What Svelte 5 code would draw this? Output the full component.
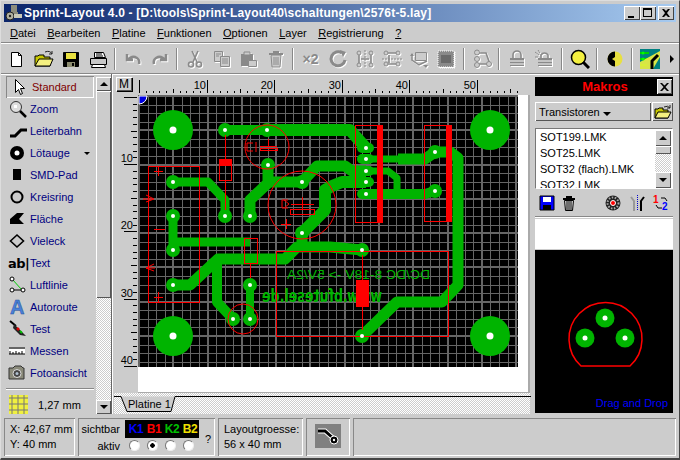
<script lang="ts">
  const menus = ['Datei', 'Bearbeiten', 'Platine', 'Funktionen', 'Optionen', 'Layer', 'Registrierung', '?'];
  const macros = ['SOT199.LMK', 'SOT25.LMK', 'SOT32 (flach).LMK', 'SOT32.LMK'];

  const range = (n: number) => Array.from({ length: n }, (_, i) => i);
  const gridX = range(45).map((k) => ({ p: 139 + Math.round(k * 8.57), major: k % 4 === 0 }));
  const gridY = range(33).map((k) => ({ p: 96 + Math.round(k * 8.57), major: k % 4 === 0 }));

  // ruler marks, every mm at 6.75 px per mm
  const topMarks = range(57).map((n) => ({ p: Math.round(5 + n * 6.75), n }));
  const sideMarks = range(41).map((n) => ({ p: Math.round(2 + n * 6.72), n }));

  const bigPads = [[173, 130], [490, 130], [173, 336], [490, 336]];
  const pads = [[225, 130], [267, 130], [173, 182], [225, 216], [173, 216], [173, 250], [250, 216], [268, 165], [302, 182], [302, 233], [362, 250], [173, 285], [233, 319], [250, 319], [250, 285], [362, 336], [435, 152], [435, 191]];
  const slots = [148, 159, 171, 182, 194];
  const traces = [
    { w: 10, d: 'M225 130H267' },
    { w: 12, d: 'M267 130H350L366 148' },
    { w: 9, d: 'M173 182H208L225 200V216' },
    { w: 9, d: 'M173 216V250M173 242H250' },
    { w: 11, d: 'M250 216V200L268 183V165M268 182H302L317 166H345L352 171H366' },
    { w: 12, d: 'M302 233L325 210V190L332 186L342 182H366' },
    { w: 10, d: 'M366 194H425L435 191' },
    { w: 7, d: 'M366 171H388L397 178V194M366 159H398' },
    { w: 11, d: 'M398 159H425L435 152H450L458 158V285L442 302H397L362 336' },
    { w: 11, d: 'M302 233V247M362 250L330 247H297L285 259H218L190 285H173' },
    { w: 10, d: 'M217 259V302L233 319' },
    { w: 8, d: 'M250 285V319' }
  ];
</script>

<div class="window">
  <header class="titlebar">
    <svg class="app-icon" width="19" height="18" viewBox="0 0 19 18">
      <path fill="#8c8c7c" d="M6 1h6v7H6zM4 8h9v4H4z" />
      <circle cx="5" cy="12" r="4" fill="#b0b0a0" stroke="#222" />
      <circle cx="5" cy="12" r="1.2" fill="#222" />
      <path fill="#c8c8b8" d="M9 10h8v4H9z" />
    </svg>
    <span class="title">Sprint-Layout 4.0 - [D:\tools\Sprint-Layout40\schaltungen\2576t-5.lay]</span>
    <div class="caption-buttons">
      <button class="cap" aria-label="Minimieren"><svg width="16" height="14"><path d="M4 10h6v2H4z" /></svg></button>
      <button class="cap" aria-label="Maximieren"><svg width="16" height="14"><path d="M3 2h9v9H3zM4 4v6h7V4z" fill-rule="evenodd" /></svg></button>
      <button class="cap close" aria-label="Schliessen"><svg width="16" height="14"><path d="M4 3h2l2 2 2-2h2l-3 4 3 4h-2l-2-2-2 2H4l3-4z" /></svg></button>
    </div>
  </header>

  <nav class="menubar">
    {#each menus as m}
      <span class="menu-item"><u>{m[0]}</u>{m.slice(1)}</span>
    {/each}
  </nav>

  <div class="toolbar">
    <span class="tb"><svg width="20" height="20"><path d="M4.5 3.5h7l3 3v11h-10z" fill="#fff" stroke="#000" /><path d="M11.5 3.5v3h3" fill="none" stroke="#000" /></svg></span>
    <span class="tb"><svg width="20" height="20"><path d="M1 17V7h3l1-1h5v2h6v9z" fill="#c8c800" stroke="#000" /><path d="M1 17l4-7h14l-3 7z" fill="#f4f080" stroke="#000" /><path d="M11 3q5-2 7 2M18 2v3h-3" fill="none" stroke="#222" /></svg></span>
    <span class="tb"><svg width="20" height="20"><path d="M2.5 3.5h15v14h-15z" fill="#000" stroke="#000" /><path d="M5 4h10v6H5z" fill="#e8e040" /><path d="M6 13h8v5H6z" fill="#8c8c70" /><path d="M11 14h2v3h-2z" fill="#000" /></svg></span>
    <span class="tb"><svg width="20" height="20"><path d="M6.5 3.5h9l2 5h-11z" fill="#fff" stroke="#000" /><path d="M2.5 9.5h16v6h-16z" fill="#c8c8c8" stroke="#000" /><path d="M4.5 15.5h12l1 3h-14z" fill="#fff" stroke="#000" /><path d="M8 5h6M8 7h7" stroke="#000" /></svg></span>
    <span class="sep"></span>
    <span class="tb dis"><svg width="20" height="20"><path d="M4 5v6h6M5 11q4-5 9-2 3 2 2 6" fill="none" stroke="#8a8a8a" stroke-width="2.5" /></svg></span>
    <span class="tb dis"><svg width="20" height="20"><path d="M16 5v6h-6M15 11q-4-5-9-2-3 2-2 6" fill="none" stroke="#8a8a8a" stroke-width="2.5" /></svg></span>
    <span class="sep"></span>
    <span class="tb dis"><svg width="20" height="20"><path d="M7 2l5 11M13 2L8 13" stroke="#8a8a8a" stroke-width="1.6" /><circle cx="6" cy="15.5" r="2.5" fill="none" stroke="#8a8a8a" stroke-width="1.6" /><circle cx="14" cy="15.5" r="2.5" fill="none" stroke="#8a8a8a" stroke-width="1.6" /></svg></span>
    <span class="tb dis"><svg width="20" height="20"><path d="M2.5 2.5h8v10h-8z" fill="#ccc" stroke="#8a8a8a" /><path d="M8.5 7.5h9v10h-9z" fill="#ccc" stroke="#8a8a8a" /><path d="M4 5h5M4 7h3M10 10h6M10 12h6M10 14h6" stroke="#8a8a8a" /></svg></span>
    <span class="tb dis"><svg width="20" height="20"><path d="M2 5h12v12H2z" fill="#8a8a8a" /><path d="M5 3h6v3H5z" fill="#ccc" stroke="#8a8a8a" /><path d="M9.5 11.5h8v6h-8z" fill="#ccc" stroke="#8a8a8a" /></svg></span>
    <span class="tb dis"><svg width="20" height="20"><path d="M3 4h14v2H3zM7 2h6v2H7z" fill="#8a8a8a" /><path d="M5 6h10l-1 12H6z" fill="#ccc" stroke="#8a8a8a" /><path d="M8 8v8M10 8v8M12 8v8" stroke="#8a8a8a" /></svg></span>
    <span class="sep"></span>
    <span class="tb dis x2">×2</span>
    <span class="tb dis"><svg width="20" height="20"><path d="M14 4a7 7 0 1 0 3 7" fill="none" stroke="#8a8a8a" stroke-width="3" /><path d="M12 1l6 2-3 5z" fill="#8a8a8a" /></svg></span>
    <span class="tb dis"><svg width="20" height="20"><path d="M10 1v18" stroke="#8a8a8a" stroke-dasharray="2 1" /><path d="M4 3v14M16 3v14M6 10h8" stroke="#8a8a8a" stroke-width="1.6" /><circle cx="4" cy="4" r="2" fill="#ccc" stroke="#8a8a8a" /><circle cx="16" cy="4" r="2" fill="#ccc" stroke="#8a8a8a" /><circle cx="4" cy="16" r="2" fill="#ccc" stroke="#8a8a8a" /><circle cx="16" cy="16" r="2" fill="#ccc" stroke="#8a8a8a" /></svg></span>
    <span class="tb dis"><svg width="20" height="20"><path d="M0 10h20" stroke="#8a8a8a" stroke-dasharray="2 1" /><path d="M3 4h14M3 15h14M7 6v8" stroke="#8a8a8a" stroke-width="1.6" /><circle cx="4" cy="4" r="2" fill="#ccc" stroke="#8a8a8a" /><circle cx="16" cy="4" r="2" fill="#ccc" stroke="#8a8a8a" /><circle cx="4" cy="15" r="2" fill="#ccc" stroke="#8a8a8a" /><circle cx="16" cy="15" r="2" fill="#ccc" stroke="#8a8a8a" /></svg></span>
    <span class="tb dis"><svg width="20" height="20"><path d="M6.5 3.5h11v8h-11z" fill="#ccc" stroke="#8a8a8a" /><path d="M3 5v6l7 5 8-4" fill="none" stroke="#8a8a8a" stroke-width="1.5" /><path d="M1 7l2-3 2 3M14 16h5l-2 3z" fill="#8a8a8a" /></svg></span>
    <span class="tb dis"><svg width="20" height="20"><path d="M2 2h16v16H2z" fill="#8a8a8a" /><path d="M2 2h16v16H2z" fill="none" stroke="#fff" stroke-dasharray="1 1" /><path d="M5 6h10v8H5z" fill="#6a6a6a" /></svg></span>
    <span class="sep wide"></span>
    <span class="tb dis"><svg width="20" height="20"><path d="M6 4h8l4 11M4 15h14" fill="none" stroke="#8a8a8a" stroke-width="1.6" /><circle cx="5" cy="3.5" r="2.5" fill="#ccc" stroke="#8a8a8a" /><circle cx="5" cy="10" r="2.5" fill="#ccc" stroke="#8a8a8a" /><circle cx="5" cy="16" r="2.5" fill="#ccc" stroke="#8a8a8a" /><circle cx="17" cy="15" r="2.5" fill="#ccc" stroke="#8a8a8a" /></svg></span>
    <span class="sep"></span>
    <span class="tb dis"><svg width="20" height="20"><path d="M6 9V6a4 4 0 0 1 8 0v3" fill="none" stroke="#8a8a8a" stroke-width="1.6" /><path d="M3 9h14v8H3z" fill="#8a8a8a" /><path d="M3 12h14M3 15h14" stroke="#fff" /></svg></span>
    <span class="tb dis"><svg width="20" height="20"><path d="M7 9V6a4 4 0 0 1 7 0v3" fill="none" stroke="#8a8a8a" stroke-width="1.6" /><path d="M4 9h14v8H4z" fill="#8a8a8a" /><path d="M4 12h14M4 15h14" stroke="#fff" /><path d="M1 3l4 3M1 8h3M4 1l2 3" stroke="#8a8a8a" /></svg></span>
    <span class="sep wide"></span>
    <span class="tb"><svg width="20" height="20"><circle cx="8.5" cy="8.5" r="7" fill="#f4f040" stroke="#000" stroke-width="1.5" /><path d="M13 13l6 6" stroke="#000" stroke-width="3" /></svg></span>
    <span class="sep"></span>
    <span class="tb"><svg width="20" height="20"><circle cx="10" cy="10" r="7.5" fill="#e8e040" /><path d="M10 2.5a7.5 7.5 0 0 0 0 15V12l-3-2 3-2z" fill="#000" /></svg></span>
    <span class="sep"></span>
    <span class="tb"><svg width="20" height="20"><path d="M0 0h20v20H0z" fill="#008080" /><path d="M0 4h9M0 10h8M0 16h7" stroke="#00d000" stroke-width="2" /><path d="M0 13l0 7h13l7-12V2z" fill="#f0f040" opacity=".9" /><path d="M12 20v-8l6-6" fill="none" stroke="#000" stroke-width="3" /><circle cx="3" cy="4" r="1.5" fill="#00ff00" /><circle cx="3" cy="10" r="1.5" fill="#00ff00" /></svg></span>
    <span class="more"></span>
  </div>

  <div class="workspace">
    <aside class="tools">
      <div class="tool-list">
        <div class="tool active">
          <svg width="22" height="18"><path d="M7.5 1.5v13l3-3 2 5 2-1-2-5h4z" fill="#fff" stroke="#000" /></svg>
          <span class="tool-name">Standard</span>
        </div>
        <div class="tool">
          <svg width="22" height="18"><circle cx="8" cy="7" r="5.5" fill="#ddd" stroke="#333" /><path d="M6 5h3v3H6z" fill="#fff" /><path d="M12 11l6 6" stroke="#000" stroke-width="2.5" /></svg>
          <span>Zoom</span>
        </div>
        <div class="tool">
          <svg width="22" height="18"><path d="M2 14h5l6-6h6" fill="none" stroke="#000" stroke-width="3" /></svg>
          <span>Leiterbahn</span>
        </div>
        <div class="tool">
          <svg width="22" height="18"><circle cx="9" cy="9" r="7" fill="#000" /><circle cx="9" cy="9" r="2.5" fill="#fff" /></svg>
          <span>Lötauge</span><i class="tool-arrow"></i>
        </div>
        <div class="tool">
          <svg width="22" height="18"><path d="M5 3h8v11H5z" /></svg>
          <span>SMD-Pad</span>
        </div>
        <div class="tool">
          <svg width="22" height="18"><circle cx="9" cy="9" r="5.5" fill="none" stroke="#000" stroke-width="2" /></svg>
          <span>Kreisring</span>
        </div>
        <div class="tool">
          <svg width="22" height="18"><path d="M2 14v-5l7-6h7l-5 6 5 5z" /></svg>
          <span>Fläche</span>
        </div>
        <div class="tool">
          <svg width="22" height="18"><path d="M9 3l6.5 6L9 15 2.500 9z" fill="none" stroke="#000" stroke-width="1.6" /></svg>
          <span>Vieleck</span>
        </div>
        <div class="tool">
          <b class="glyph-ab">ab|</b>
          <span>Text</span>
        </div>
        <div class="tool">
          <svg width="22" height="18"><path d="M4 3l10 11" stroke="#00d000" /><path d="M4 14h11" stroke="#000" /><circle cx="4" cy="3" r="2" fill="#fff" stroke="#000" /><circle cx="4" cy="14" r="2" fill="#fff" stroke="#000" /><circle cx="15" cy="14" r="2" fill="#fff" stroke="#000" /></svg>
          <span>Luftlinie</span>
        </div>
        <div class="tool">
          <b class="glyph-a">A</b>
          <span>Autoroute</span>
        </div>
        <div class="tool">
          <svg width="22" height="18"><path d="M2 1l6 5" stroke="#000" stroke-width="2" /><path d="M6 4l9 9 3 3-6-1-7-7z" fill="#222" /><path d="M9 8l2 2" stroke="#e00000" stroke-width="2.500" /><path d="M12 11l2 2" stroke="#00c000" stroke-width="2" /></svg>
          <span>Test</span>
        </div>
        <div class="tool">
          <svg width="22" height="18"><path d="M1 7h16v5H1z" fill="#fff" /><path d="M1 6h16M1 12h16M2 9v3M5 10v2M8 9v3M11 10v2M14 9v3" stroke="#000" /></svg>
          <span>Messen</span>
        </div>
        <div class="tool">
          <svg width="22" height="18"><path d="M1 4h4l2-2h6l2 2h1v11H1z" fill="#8a8a7a" stroke="#333" /><circle cx="9" cy="9.500" r="4" fill="#444" stroke="#ddd" /><circle cx="9" cy="9.500" r="1.500" fill="#b0c0d0" /></svg>
          <span>Fotoansicht</span>
        </div>
        <div class="tool-divider"></div>
        <div class="raster">
          <svg width="19" height="19"><path d="M0 0h19v19H0z" fill="#f0f040" /><path d="M0 3h19M0 9h19M0 15h19M3 0v19M9 0v19M15 0v19" stroke="#777" /></svg>
          <span>1,27 mm</span>
        </div>
      </div>
      <div class="vscroll">
        <button class="sb-btn" aria-label="Hoch"><i class="up"></i></button>
        <div class="sb-thumb"></div>
        <div class="sb-track"></div>
        <button class="sb-btn" aria-label="Runter"><i class="dn"></i></button>
      </div>
    </aside>

    <main class="center">
      <div class="ruler-row">
        <button class="m-btn">M</button>
        <svg class="ruler-top" width="396" height="21" shape-rendering="crispEdges">
          {#each topMarks as t}
            <path d={t.n % 10 === 0 ? `M${t.p}.5 6V19` : `M${t.p}.5 ${t.n % 5 === 0 ? 15 : 17}V19`} stroke="#000" />
            {#if t.n % 10 === 0 && t.n > 0}
              <text x={t.p - 1} y="15" text-anchor="end">{t.n}</text>
            {/if}
          {/each}
        </svg>
      </div>
      <div class="canvas-row">
        <svg class="ruler-side" width="24" height="298" shape-rendering="crispEdges">
          {#each sideMarks as s}
            <path d={s.n % 10 === 0 ? `M10 ${s.p}.5H23` : `M${s.n % 5 === 0 ? 17 : 19} ${s.p}.5H23`} stroke="#000" />
            {#if s.n % 10 === 0 && s.n > 0}
              <text x="19" y={s.p - 2} text-anchor="end">{s.n}</text>
            {/if}
          {/each}
        </svg>
        <div class="sheet">
          <svg class="board" width="380" height="272" viewBox="138 95 380 272">
            <rect x="138" y="95" width="380" height="272" fill="#000" />
            <g shape-rendering="crispEdges" stroke="#666">
              {#each gridX as g}
                <path d={`M${g.p} 95V367`} stroke-width={g.major ? 2 : 1} />
              {/each}
              {#each gridY as g}
                <path d={`M138 ${g.p}H518`} stroke-width={g.major ? 2 : 1} />
              {/each}
            </g>
            <path d="M139 96h8a8 8 0 0 1-8 8z" fill="#0000e0" stroke="#fff" />
            <g fill="#00b400">
              {#each traces as t}
                <path d={t.d} fill="none" stroke="#00b400" stroke-width={t.w} stroke-linejoin="round" />
              {/each}
              {#each bigPads as [x, y]}
                <circle cx={x} cy={y} r="20" />
              {/each}
              {#each pads as [x, y]}
                <circle cx={x} cy={y} r="7" />
              {/each}
              {#each slots as y}
                <rect x="357" y={y - 5} width="17" height="10" rx="5" />
              {/each}
              <text class="silk-big" x="-382" y="302" textLength="120" lengthAdjust="spacingAndGlyphs" transform="scale(-1 1)">www.bfutesel.de</text>
              <text class="silk-small" x="-430" y="279" textLength="143" lengthAdjust="spacingAndGlyphs" transform="scale(-1 1)">DC/DC 8-18V -&gt; 5V/2A</text>
            </g>
            <g fill="none" stroke="#f00" shape-rendering="crispEdges">
              <path d="M148.500 166.500H199.500V302.500H148.500z" />
              <path d="M154 171h9M158.500 167v9M154 229h11M154 297h9M158.500 292v10" />
              <path d="M225.500 135V159M225.500 181V210M219.500 165.500H231.500V180.500H219.500z" />
              <path d="M355.500 125.500H382.500V222.500H355.500zM424.500 125.500H451.500V221.500H424.500z" />
              <path d="M244.500 238.500H257.500V263.500H244.500zM250.500 263V278M276.500 251.500H448.500V336.500H276.500z" />
              <path d="M362.500 255V280M362.500 307V330" />
              <path d="M260 146.500H277M260 148.500H277V150.500H260zM268 139v8" />
              <path d="M291 204.500H314M290.500 209.500H314.500V214.500H290.500zM302.500 197V209M281 224h10M286 219v10" />
            </g>
            <g fill="none" stroke="#f00">
              <circle cx="267" cy="147" r="22" />
              <circle cx="302" cy="205" r="34" />
              <circle cx="243" cy="319" r="15" />
              <path d="M253 143h-6v8h6M256 142v10M146 195l8 4-8 3M143 199h9M154 264l-8 4 8 3M146 268h9M288 200h-6v8h6M284 200l5 4-5 4" />
            </g>
            <g fill="#f00">
              <rect x="219" y="159" width="13" height="6" />
              <rect x="377" y="125" width="5" height="98" />
              <rect x="446" y="125" width="5" height="97" />
              <rect x="356" y="280" width="13" height="27" />
            </g>
            <g fill="#fff">
              {#each bigPads as [x, y]}
                <circle cx={x} cy={y} r="3.500" />
              {/each}
              {#each pads as [x, y]}
                <circle cx={x} cy={y} r="2" />
              {/each}
              {#each slots as y}
                <circle cx="366" cy={y} r="2" />
              {/each}
            </g>
          </svg>
        </div>
      </div>
      <div class="tabstrip">
        <div class="tab">
          <svg class="tab-shape" width="417" height="18"><path d="M0 .5H7L13 15.500H57L61 .5H417" fill="#ccc" stroke="#000" /></svg>
          <span class="tab-label">Platine 1</span>
        </div>
      </div>
    </main>

    <aside class="macros">
      <div class="macro-head">
        <span>Makros</span>
        <button class="mini-x" aria-label="Schliessen"><svg width="15" height="14"><path d="M3 3h2l2.500 2.500L10 3h2L8.500 7 12 11h-2L7.500 8.500 5 11H3l3.500-4z" /></svg></button>
      </div>
      <div class="macro-select">
        <button class="dropdown">Transistoren <i class="dn"></i></button>
        <button class="folder" aria-label="Öffnen"><svg width="18" height="16"><path d="M1 14V5h3l1-1h4v2h5v8z" fill="#c8c800" stroke="#000" /><path d="M1 14l3-6h13l-3 6z" fill="#f4f080" stroke="#000" /><path d="M10 3q4-2 6 1M16 1v3h-3" fill="none" stroke="#222" /></svg></button>
      </div>
      <div class="listbox">
        <ul>
          {#each macros as m}
            <li>{m}</li>
          {/each}
        </ul>
        <div class="list-scroll">
          <button class="sb-btn tall" aria-label="Hoch"><i class="up"></i></button>
          <div class="list-thumb"></div>
          <div class="sb-track"></div>
          <button class="sb-btn tall" aria-label="Runter"><i class="dn"></i></button>
        </div>
      </div>
      <div class="macro-tools">
        <svg width="16" height="16"><path d="M1 1h14v14H1z" fill="#0000ff" stroke="#000" /><path d="M4 2h8v5H4z" fill="#fff" /><path d="M4 10h8v5H4z" fill="#000" /></svg>
        <svg class="mt-trash" width="14" height="16"><path d="M1 3h12v2H1zM4 1h6v2H4z" /><path d="M2.500 5.500h9l-1 10h-7z" fill="#ddd" stroke="#000" /><path d="M5 6v9M7 6v9M9 6v9" stroke="#000" /></svg>
        <svg class="mt-disc" width="16" height="16"><circle cx="8" cy="8" r="7.500" fill="#222" /><circle cx="8" cy="8" r="5.500" fill="none" stroke="#aaa" stroke-dasharray="1.500 1.500" stroke-width="2" /><circle cx="8" cy="8" r="2.500" fill="#f00" stroke="#fff" /></svg>
        <svg class="mt-mirror" width="16" height="16"><path d="M8.500 0v16" stroke="#0000d0" stroke-dasharray="1 1" /><path d="M5 16V6L2 2" fill="none" stroke="#999" stroke-width="2" /><path d="M12 16V6l3-4" fill="none" stroke="#000" stroke-width="2" /></svg>
        <svg class="mt-swap" width="17" height="20" viewBox="0 0 17 20"><path d="M8 5h4l2 3M9 15H5L3 12" fill="none" stroke="#000" /><text class="n1" x="0" y="10">1</text><text class="n2" x="9" y="17">2</text></svg>
      </div>
      <div class="macro-divider"></div>
      <div class="macro-note"></div>
      <div class="preview">
        <svg width="137" height="163" viewBox="536 249 137 163">
          <path d="M582 365a36.500 36.500 0 1 1 49 0z" fill="none" stroke="#f00" stroke-width="1.500" />
          <g fill="#00b400">
            <circle cx="606" cy="317" r="9.500" />
            <circle cx="586" cy="337" r="9.500" />
            <circle cx="626" cy="337" r="9.500" />
          </g>
          <g fill="#fff">
            <circle cx="606" cy="317" r="2.500" />
            <circle cx="586" cy="337" r="2.500" />
            <circle cx="626" cy="337" r="2.500" />
          </g>
        </svg>
        <span class="drag">Drag and Drop</span>
      </div>
    </aside>
  </div>

  <footer class="statusbar">
    <div class="panel coords">
      <span>X: 42,67 mm</span>
      <span>Y: 40 mm</span>
    </div>
    <div class="panel layers">
      <div class="layer-labels">
        <span>sichtbar</span>
        <span>aktiv</span>
      </div>
      <div class="layer-grid">
        <div class="chips"><b class="k1">K1</b><b class="b1">B1</b><b class="k2">K2</b><b class="b2">B2</b></div>
        <div class="radios">
          <i class="radio"></i><i class="radio on"></i><i class="radio"></i><i class="radio"></i>
        </div>
      </div>
      <span class="q">?</span>
    </div>
    <div class="panel size">
      <span>Layoutgroesse:</span>
      <span>56 x 40 mm</span>
    </div>
    <div class="panel mode">
      <svg width="26" height="24"><path d="M0 0h26v24H0z" fill="#808080" /><path d="M3 7h7l9 8" fill="none" stroke="#fff" stroke-width="5" /><path d="M3 7h7l9 8" fill="none" stroke="#000" stroke-width="3" /><circle cx="19" cy="16" r="4" fill="#000" stroke="#fff" /><circle cx="19" cy="16" r="1.200" fill="#fff" /></svg>
    </div>
    <div class="panel rest"></div>
  </footer>
</div>

<style>
  :global(body) {
    margin: 0;
    background: #ccc;
  }

  .window {
    width: 680px;
    height: 460px;
    box-sizing: border-box;
    display: flex;
    flex-direction: column;
    overflow: hidden;
    background: #ccc;
    color: #000;
    font: 11px "Liberation Sans", Arial, sans-serif;
    border-top: 1px solid #ddd;
    border-left: 1px solid #ddd;
    border-right: 1px solid #444;
    border-bottom: 2px solid #444;
  }

  svg {
    display: block;
    flex: none;
  }

  button {
    padding: 0;
    font: inherit;
    color: inherit;
  }

  button,
  .tool.active {
    box-sizing: border-box;
  }

  /* title */
  .titlebar {
    flex: none;
    height: 18px;
    margin: 3px 3px 0;
    display: flex;
    align-items: center;
    background: linear-gradient(90deg, #0a246a, #a6caf0);
    color: #fff;
  }

  .app-icon {
    margin-left: 1px;
  }

  .title {
    font: bold 12px "Liberation Sans", Arial, sans-serif;
    white-space: nowrap;
    letter-spacing: 0.18px;
  }

  .caption-buttons {
    margin-left: auto;
    margin-right: 2px;
    display: flex;
  }

  .cap {
    width: 16px;
    height: 14px;
    background: #ccc;
    border: none;
    box-shadow: inset 1px 1px #fff, inset -1px -1px #444;
  }

  .close {
    margin-left: 2px;
  }

  /* menu */
  .menubar {
    flex: none;
    height: 19px;
    margin-top: 1px;
    padding-left: 9px;
    display: flex;
    align-items: center;
    gap: 11.500px;
    border-bottom: 1px solid #888;
    box-shadow: 0 1px #fff;
  }

  /* toolbar */
  .toolbar {
    flex: none;
    height: 28px;
    margin-top: 2px;
    padding-left: 2px;
    display: flex;
    align-items: center;
    border-bottom: 1px solid #888;
    box-shadow: 0 1px #fff;
  }

  .tb {
    flex: none;
    width: 27px;
    height: 24px;
    display: flex;
    align-items: center;
    justify-content: center;
  }

  .dis svg {
    filter: drop-shadow(1px 1px 0 #fff);
  }

  .x2 {
    font: bold 14px "Liberation Sans", Arial, sans-serif;
    color: #8a8a8a;
    text-shadow: 1px 1px #fff;
  }

  .sep {
    flex: none;
    width: 8px;
    height: 22px;
    background: linear-gradient(90deg, transparent 3px, #888 3px, #888 4px, #fff 4px, #fff 5px, transparent 5px);
  }

  .sep.wide {
    width: 9px;
    background: linear-gradient(90deg, transparent 4px, #888 4px, #888 5px, #fff 5px, #fff 6px, transparent 6px);
  }

  .more {
    margin-left: 7px;
    border-left: 4px solid #000;
    border-top: 4px solid transparent;
    border-bottom: 4px solid transparent;
  }

  /* workspace */
  .workspace {
    flex: none;
    height: 340px;
    display: flex;
  }

  .tools {
    flex: none;
    width: 111px;
    height: 340px;
    padding-top: 2px;
    box-sizing: border-box;
    display: flex;
    border-right: 1px solid #666;
    box-shadow: 1px 0 #fff;
  }

  .tool-list {
    width: 96px;
    padding: 0 0 0 5px;
    box-sizing: border-box;
  }

  .tool {
    width: 88px;
    height: 22px;
    box-sizing: border-box;
    padding-left: 2px;
    display: flex;
    align-items: center;
    color: #000080;
    font-size: 11px;
  }

  .tool.active {
    color: #800000;
    box-shadow: inset 1px 1px #888, inset -1px -1px #fff;
  }

  .tool-name {
    margin-left: 2px;
  }

  .tool-arrow {
    margin-left: 14px;
    border-top: 3px solid #000;
    border-left: 3px solid transparent;
    border-right: 3px solid transparent;
  }

  .glyph-ab {
    width: 22px;
    color: #000;
    font: bold 13px "DejaVu Sans", sans-serif;
    letter-spacing: -0.5px;
  }

  .glyph-a {
    width: 22px;
    padding-left: 2px;
    box-sizing: border-box;
    color: #4a80d8;
    font: bold 20px "Liberation Sans", sans-serif;
    -webkit-text-stroke: 0.5px #24509c;
  }

  .tool-divider {
    width: 88px;
    height: 1px;
    margin-top: 4px;
    background: #888;
    box-shadow: 0 1px #fff;
  }

  .raster {
    margin-top: 6px;
    padding-left: 3px;
    display: flex;
    align-items: center;
    gap: 10px;
  }

  .vscroll {
    width: 15px;
    display: flex;
    flex-direction: column;
    margin-top: 1px;
  }

  .sb-btn {
    flex: none;
    width: 100%;
    height: 14px;
    display: flex;
    align-items: center;
    justify-content: center;
    background: #ccc;
    border: none;
    box-shadow: inset 1px 1px #fff, inset -1px -1px #555;
  }

  .sb-btn.tall {
    height: 16px;
  }

  .up {
    border-bottom: 4px solid #000;
    border-left: 4px solid transparent;
    border-right: 4px solid transparent;
  }

  .dn {
    display: inline-block;
    border-top: 4px solid #000;
    border-left: 4px solid transparent;
    border-right: 4px solid transparent;
  }

  .sb-thumb {
    flex: none;
    height: 207px;
    box-sizing: border-box;
    background: #ccc;
    box-shadow: inset 1px 1px #fff, inset -1px -1px #555;
  }

  .sb-track {
    flex: 1;
    background: repeating-conic-gradient(#fff 0 25%, #ccc 0 50%) 0 0 / 2px 2px;
  }

  /* center */
  .center {
    flex: none;
    width: 416px;
    margin-left: 2px;
    display: flex;
    flex-direction: column;
  }

  .ruler-row {
    height: 21px;
    display: flex;
    align-items: flex-start;
  }

  .m-btn {
    width: 16px;
    height: 14px;
    margin: 3px 0 0 2px;
    font-size: 12px;
    line-height: 12px;
    background: #ccc;
    border: none;
    box-shadow: inset 1px 1px #fff, inset -1px -1px #555, 1px 1px #000;
  }

  .ruler-top {
    margin-left: 2px;
  }

  .ruler-top text,
  .ruler-side text {
    font: 11px "Liberation Sans", sans-serif;
    fill: #000;
  }

  .canvas-row {
    height: 298px;
    display: flex;
  }

  .sheet {
    width: 392px;
    height: 298px;
    box-sizing: border-box;
    background: #fff;
    border-right: 2px solid #aaa;
    border-bottom: 1px solid #aaa;
  }

  .silk-big {
    font: bold 17px "DejaVu Sans", sans-serif;
  }

  .silk-small {
    font: 13px "Liberation Sans", sans-serif;
  }

  .tabstrip {
    flex: 1;
    padding-top: 3px;
    background: repeating-conic-gradient(#fff 0 25%, #ccc 0 50%) 0 0 / 2px 2px;
  }

  .tab {
    position: relative;
    height: 18px;
  }

  .tab-shape {
    position: absolute;
    left: 0;
    top: 0;
  }

  .tab-label {
    position: absolute;
    left: 14px;
    top: 2px;
    white-space: nowrap;
  }

  /* macros */
  .macros {
    flex: none;
    width: 138px;
    margin-left: 5px;
    padding-top: 3px;
    display: flex;
    flex-direction: column;
  }

  .macro-head {
    flex: none;
    height: 19px;
    padding-right: 1px;
    display: flex;
    align-items: center;
    background: #000;
    color: #f00;
    font: bold 13px "Liberation Sans", Arial, sans-serif;
  }

  .macro-head span {
    flex: 1;
    padding-left: 18px;
    text-align: center;
  }

  .mini-x {
    width: 15px;
    height: 15px;
    background: #ccc;
    border: none;
    box-shadow: inset 1px 1px #fff, inset -1px -1px #555;
  }

  .macro-select {
    flex: none;
    height: 19px;
    margin-top: 6px;
    display: flex;
    gap: 1px;
  }

  .dropdown {
    flex: 1;
    padding-left: 4px;
    text-align: left;
    background: #ccc;
    border: none;
    box-shadow: inset 1px 1px #fff, inset -1px -1px #555;
  }

  .folder {
    width: 21px;
    display: flex;
    align-items: center;
    justify-content: center;
    background: #ccc;
    border: none;
    box-shadow: inset 1px 1px #fff, inset -1px -1px #555;
  }

  .listbox {
    flex: none;
    height: 61px;
    margin-top: 7px;
    box-sizing: border-box;
    display: flex;
    background: #fff;
    border: 1px solid #777;
    border-right-color: #fff;
    border-bottom-color: #fff;
    overflow: hidden;
  }

  .listbox ul {
    flex: 1;
    margin: 0;
    padding: 0 0 0 4px;
    list-style: none;
  }

  .listbox li {
    height: 16px;
    line-height: 16px;
    white-space: nowrap;
  }

  .list-scroll {
    width: 16px;
    margin: 1px 1px 0 0;
    display: flex;
    flex-direction: column;
  }

  .list-thumb {
    flex: none;
    height: 8px;
    background: #ccc;
    box-shadow: inset 1px 1px #fff, inset -1px -1px #555;
  }

  .macro-tools {
    flex: none;
    height: 27px;
    padding-left: 4px;
    display: flex;
    align-items: center;
  }

  .mt-trash {
    margin-left: 7px;
  }

  .mt-disc {
    margin-left: 29px;
  }

  .mt-mirror {
    margin-left: 8px;
  }

  .mt-swap {
    margin-left: 8px;
  }

  .n1,
  .n2 {
    font: bold 10px "Liberation Sans", sans-serif;
  }

  .n1 {
    fill: #f00;
  }

  .n2 {
    fill: #0000ff;
  }

  .macro-divider {
    flex: none;
    height: 1px;
    background: #888;
    box-shadow: 0 1px #fff;
  }

  .macro-note {
    flex: none;
    height: 30px;
    margin-top: 2px;
    background: #fff;
  }

  .preview {
    position: relative;
    flex: none;
    height: 163px;
    margin-top: 1px;
    background: #000;
  }

  .drag {
    position: absolute;
    right: 5px;
    bottom: 4px;
    color: #0000ff;
  }

  /* status */
  .statusbar {
    flex: 1;
    min-height: 0;
    margin-top: 1px;
    padding: 3px 3px 2px;
    display: flex;
    gap: 3px;
  }

  .panel {
    box-sizing: border-box;
    box-shadow: inset 1px 1px #888, inset -1px -1px #fff;
  }

  .coords {
    width: 71px;
    padding: 5px 0 0 6px;
    display: flex;
    flex-direction: column;
    gap: 3px;
    white-space: nowrap;
  }

  .layers {
    width: 137px;
    padding: 2px 0 0 5px;
    display: flex;
  }

  .layer-labels {
    width: 37px;
    margin-right: 5px;
    display: flex;
    flex-direction: column;
    align-items: flex-end;
    gap: 5px;
    padding-top: 3px;
  }

  .chips {
    display: flex;
    width: 74px;
    height: 18px;
    box-sizing: border-box;
    padding-left: 2px;
    align-items: center;
    background: #000;
    font: bold 12px "Liberation Sans", sans-serif;
    letter-spacing: -0.5px;
  }

  .chips b {
    width: 18px;
    text-align: center;
  }

  .k1 {
    color: #0000ff;
  }

  .b1 {
    color: #f00;
  }

  .k2 {
    color: #00c000;
  }

  .b2 {
    color: #f0e000;
  }

  .radios {
    margin-top: 2px;
    padding-left: 4px;
    display: flex;
    gap: 7px;
  }

  .radio {
    width: 11px;
    height: 11px;
    box-sizing: border-box;
    border-radius: 50%;
    background: #fff;
    border: 1px solid #777;
    border-right-color: #eee;
    border-bottom-color: #eee;
  }

  .radio.on {
    background: radial-gradient(circle, #000 0 2px, #fff 2.500px);
  }

  .q {
    margin: 13px 0 0 6px;
  }

  .size {
    width: 85px;
    padding: 5px 0 0 6px;
    display: flex;
    flex-direction: column;
    gap: 3px;
    white-space: nowrap;
  }

  .mode {
    width: 44px;
    padding: 6px 0 0 9px;
  }

  .rest {
    flex: 1;
  }
</style>
